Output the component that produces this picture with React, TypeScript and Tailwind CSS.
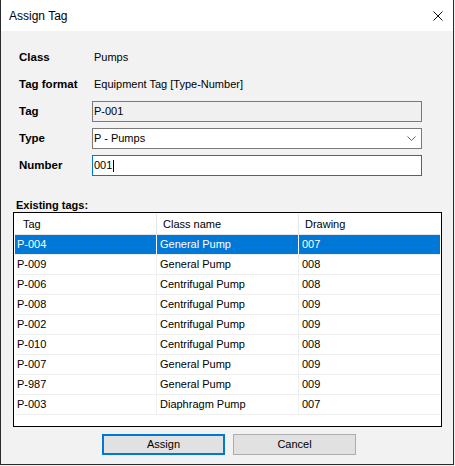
import React from "react";

const rows = [
  { tag: "P-004", cls: "General Pump", drawing: "007" },
  { tag: "P-009", cls: "General Pump", drawing: "008" },
  { tag: "P-006", cls: "Centrifugal Pump", drawing: "008" },
  { tag: "P-008", cls: "Centrifugal Pump", drawing: "009" },
  { tag: "P-002", cls: "Centrifugal Pump", drawing: "009" },
  { tag: "P-010", cls: "Centrifugal Pump", drawing: "008" },
  { tag: "P-007", cls: "General Pump", drawing: "009" },
  { tag: "P-987", cls: "General Pump", drawing: "009" },
  { tag: "P-003", cls: "Diaphragm Pump", drawing: "007" },
];

export default function App() {
  return (
    <div className="w-[455px] h-[466px] bg-[#f0f0f0] font-['Liberation_Sans',Arial,sans-serif] text-[11px] text-black">
      <div className="w-[454px] h-[465px] border-x border-b border-[#2b2b2b] bg-[#f2f2f2] flex flex-col">
        {/* Title bar */}
        <div className="h-[31px] bg-white flex items-center justify-between pl-[8px] pr-[10px]">
          <span className="text-[12px]">Assign Tag</span>
          <svg width="10" height="10" viewBox="0 0 10 10" className="text-[#111]">
            <path d="M0.5 0.5 L9.5 9.5 M9.5 0.5 L0.5 9.5" stroke="currentColor" strokeWidth="1" fill="none" />
          </svg>
        </div>

        {/* Form */}
        <div className="pt-[13px] pl-[18px]">
          <div className="h-[27px] flex items-center">
            <span className="w-[73px] font-bold text-[11.5px]">Class</span>
            <span className="pl-[2px]">Pumps</span>
          </div>
          <div className="h-[27px] flex items-center">
            <span className="w-[73px] font-bold text-[11.5px]">Tag format</span>
            <span className="pl-[2px]">Equipment Tag [Type-Number]</span>
          </div>
          <div className="h-[27px] flex items-center">
            <span className="w-[73px] font-bold text-[11.5px]">Tag</span>
            <div className="w-[330px] h-[21px] border border-[#7a7a7a] bg-[#f0f0f0] flex items-center pl-[1px]">
              P-001
            </div>
          </div>
          <div className="h-[27px] flex items-center">
            <span className="w-[73px] font-bold text-[11.5px]">Type</span>
            <div className="w-[330px] h-[21px] border border-[#7a7a7a] bg-white flex items-center justify-between pl-[1px] pr-[5px]">
              <span>P - Pumps</span>
              <svg width="9" height="5" viewBox="0 0 9 5">
                <path d="M0.5 0.5 L4.5 4.5 L8.5 0.5" stroke="#606060" strokeWidth="1" fill="none" />
              </svg>
            </div>
          </div>
          <div className="h-[27px] flex items-center">
            <span className="w-[73px] font-bold text-[11.5px]">Number</span>
            <div className="w-[330px] h-[21px] border border-[#0078d7] bg-white flex items-center pl-[1px]">
              <span>001</span>
              <span className="w-px h-[12px] bg-black ml-px" />
            </div>
          </div>
        </div>

        {/* Existing tags */}
        <div className="mt-[20px] pl-[15px] h-[13px] leading-[13px] font-bold">Existing tags:</div>
        <div className="ml-[12px] w-[429px] h-[215px] border border-black bg-white p-px">
          <div className="h-[21px] flex border-b border-[#e5e5e5]">
            <div className="w-[142px] border-r border-[#e5e5e5] pl-[8px] flex items-center">Tag</div>
            <div className="w-[142px] border-r border-[#e5e5e5] pl-[6px] flex items-center">Class name</div>
            <div className="flex-1 pl-[6px] flex items-center">Drawing</div>
          </div>
          {rows.map((r, i) => {
            const sel = i === 0;
            const line = sel ? "border-white" : "border-[#f0f0f0]";
            return (
              <div
                key={r.tag}
                className={`h-[20px] flex border-b border-[#f0f0f0] ${sel ? "bg-[#0078d7] text-white" : ""}`}
              >
                <div className={`w-[142px] border-r ${line} pl-[2px] flex items-center`}>{r.tag}</div>
                <div className={`w-[142px] border-r ${line} pl-[3px] flex items-center`}>{r.cls}</div>
                <div className="flex-1 pl-[3px] flex items-center">{r.drawing}</div>
              </div>
            );
          })}
        </div>

        {/* Buttons */}
        <div className="mt-[7px] ml-[101px] flex gap-[8px]">
          <button className="w-[123px] h-[21px] border-2 border-[#0078d7] bg-[#e1e1e1] flex items-center justify-center">
            Assign
          </button>
          <button className="w-[123px] h-[21px] border border-[#adadad] bg-[#e1e1e1] flex items-center justify-center">
            Cancel
          </button>
        </div>
      </div>
    </div>
  );
}
